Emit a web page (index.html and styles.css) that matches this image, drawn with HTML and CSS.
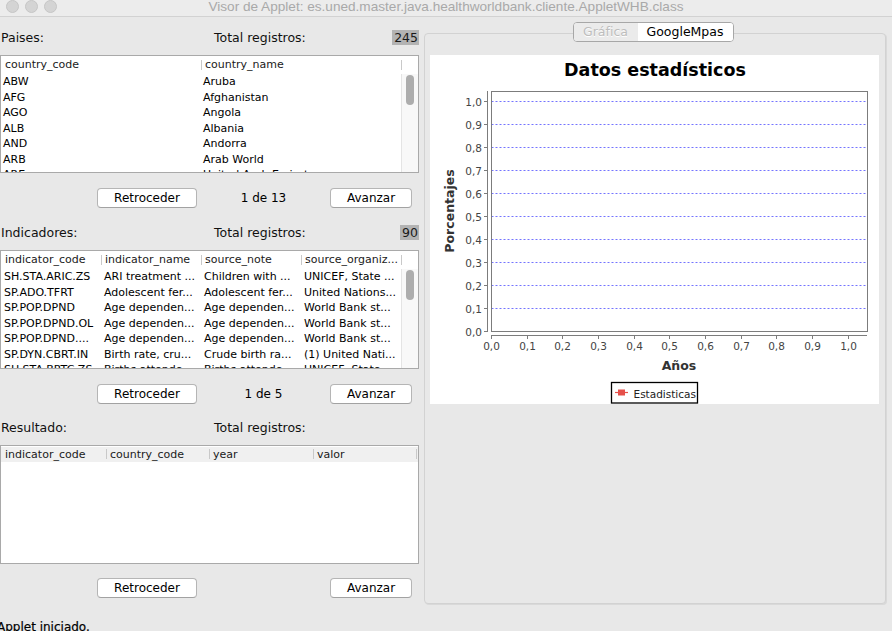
FILE: index.html
```html
<!DOCTYPE html>
<html lang="es">
<head>
<meta charset="utf-8">
<title>Visor de Applet</title>
<link rel="stylesheet" href="styles.css">
</head>
<body>
<div class="titlebar">
  <div class="lights"><span></span><span></span><span></span></div>
  <div class="wtitle">Visor de Applet: es.uned.master.java.healthworldbank.cliente.AppletWHB.class</div>
  <div></div>
</div>
<div class="main">
  <div class="left">
    <section class="group g1">
      <div class="labelrow"><span>Paises:</span><span>Total registros:</span><span class="count">245</span></div>
      <div class="table t1">
        <div class="thead"><div class="th">country_code</div><div class="th">country_name</div><div class="th"></div></div>
        <div class="tbody">
          <div class="rows">
            <div class="tr"><span>ABW</span><span>Aruba</span></div>
            <div class="tr"><span>AFG</span><span>Afghanistan</span></div>
            <div class="tr"><span>AGO</span><span>Angola</span></div>
            <div class="tr"><span>ALB</span><span>Albania</span></div>
            <div class="tr"><span>AND</span><span>Andorra</span></div>
            <div class="tr"><span>ARB</span><span>Arab World</span></div>
            <div class="tr"><span>ARE</span><span>United Arab Emirates</span></div>
          </div>
          <div class="vscroll"><div class="thumb"></div></div>
        </div>
      </div>
      <div class="pager"><button class="btn back">Retroceder</button><span class="page">1 de 13</span><button class="btn next">Avanzar</button></div>
    </section>
    <section class="group g2">
      <div class="labelrow"><span>Indicadores:</span><span>Total registros:</span><span class="count">90</span></div>
      <div class="table t2">
        <div class="thead"><div class="th">indicator_code</div><div class="th">indicator_name</div><div class="th">source_note</div><div class="th">source_organiz...</div><div class="th"></div></div>
        <div class="tbody">
          <div class="rows">
            <div class="tr"><span>SH.STA.ARIC.ZS</span><span>ARI treatment ...</span><span>Children with ...</span><span>UNICEF, State ...</span></div>
            <div class="tr"><span>SP.ADO.TFRT</span><span>Adolescent fer...</span><span>Adolescent fer...</span><span>United Nations...</span></div>
            <div class="tr"><span>SP.POP.DPND</span><span>Age dependen...</span><span>Age dependen...</span><span>World Bank st...</span></div>
            <div class="tr"><span>SP.POP.DPND.OL</span><span>Age dependen...</span><span>Age dependen...</span><span>World Bank st...</span></div>
            <div class="tr"><span>SP.POP.DPND....</span><span>Age dependen...</span><span>Age dependen...</span><span>World Bank st...</span></div>
            <div class="tr"><span>SP.DYN.CBRT.IN</span><span>Birth rate, cru...</span><span>Crude birth ra...</span><span>(1) United Nati...</span></div>
            <div class="tr"><span>SH.STA.BRTC.ZS</span><span>Births attende...</span><span>Births attende...</span><span>UNICEF, State ...</span></div>
          </div>
          <div class="vscroll"><div class="thumb"></div></div>
        </div>
      </div>
      <div class="pager"><button class="btn back">Retroceder</button><span class="page">1 de 5</span><button class="btn next">Avanzar</button></div>
    </section>
    <section class="group g3">
      <div class="labelrow"><span>Resultado:</span><span>Total registros:</span><span></span></div>
      <div class="table t3">
        <div class="thead"><div class="th">indicator_code</div><div class="th">country_code</div><div class="th">year</div><div class="th">valor</div><div class="th"></div></div>
        <div class="tbody"></div>
      </div>
      <div class="pager"><button class="btn back">Retroceder</button><span class="page"></span><button class="btn next">Avanzar</button></div>
    </section>
  </div>
  <div class="right">
    <div class="tabs"><span class="tab off">Gráfica</span><span class="tab on">GoogleMpas</span></div>
    <div class="tabpanel">
      <div class="chart">
        <svg class="chart-svg" viewBox="0 0 449 349" width="449" height="349">
          <text class="ctitle" x="225" y="21" text-anchor="middle">Datos estadísticos</text>
          <g class="grid">
            <line x1="61.5" y1="46.5" x2="437" y2="46.5"/>
            <line x1="61.5" y1="69.5" x2="437" y2="69.5"/>
            <line x1="61.5" y1="92.5" x2="437" y2="92.5"/>
            <line x1="61.5" y1="115.5" x2="437" y2="115.5"/>
            <line x1="61.5" y1="138.5" x2="437" y2="138.5"/>
            <line x1="61.5" y1="161.5" x2="437" y2="161.5"/>
            <line x1="61.5" y1="184.5" x2="437" y2="184.5"/>
            <line x1="61.5" y1="207.5" x2="437" y2="207.5"/>
            <line x1="61.5" y1="230.5" x2="437" y2="230.5"/>
            <line x1="61.5" y1="253.5" x2="437" y2="253.5"/>
          </g>
          <rect class="plotbox" x="61.5" y="36.5" width="376" height="240"/>
          <g class="axis">
            <line x1="57.5" y1="36" x2="57.5" y2="277"/>
            <line x1="54" y1="46.5" x2="57.5" y2="46.5"/>
            <line x1="54" y1="69.5" x2="57.5" y2="69.5"/>
            <line x1="54" y1="92.5" x2="57.5" y2="92.5"/>
            <line x1="54" y1="115.5" x2="57.5" y2="115.5"/>
            <line x1="54" y1="138.5" x2="57.5" y2="138.5"/>
            <line x1="54" y1="161.5" x2="57.5" y2="161.5"/>
            <line x1="54" y1="184.5" x2="57.5" y2="184.5"/>
            <line x1="54" y1="207.5" x2="57.5" y2="207.5"/>
            <line x1="54" y1="230.5" x2="57.5" y2="230.5"/>
            <line x1="54" y1="253.5" x2="57.5" y2="253.5"/>
            <line x1="54" y1="276.5" x2="57.5" y2="276.5"/>
            <line x1="61" y1="280.5" x2="437" y2="280.5"/>
            <line x1="61.5" y1="280.5" x2="61.5" y2="284"/>
            <line x1="97.5" y1="280.5" x2="97.5" y2="284"/>
            <line x1="132.5" y1="280.5" x2="132.5" y2="284"/>
            <line x1="168.5" y1="280.5" x2="168.5" y2="284"/>
            <line x1="204.5" y1="280.5" x2="204.5" y2="284"/>
            <line x1="239.5" y1="280.5" x2="239.5" y2="284"/>
            <line x1="275.5" y1="280.5" x2="275.5" y2="284"/>
            <line x1="311.5" y1="280.5" x2="311.5" y2="284"/>
            <line x1="346.5" y1="280.5" x2="346.5" y2="284"/>
            <line x1="382.5" y1="280.5" x2="382.5" y2="284"/>
            <line x1="418.5" y1="280.5" x2="418.5" y2="284"/>
          </g>
          <g class="ticklbl" text-anchor="end">
            <text x="52" y="50.7">1,0</text>
            <text x="52" y="73.7">0,9</text>
            <text x="52" y="96.7">0,8</text>
            <text x="52" y="119.7">0,7</text>
            <text x="52" y="142.7">0,6</text>
            <text x="52" y="165.7">0,5</text>
            <text x="52" y="188.7">0,4</text>
            <text x="52" y="211.7">0,3</text>
            <text x="52" y="234.7">0,2</text>
            <text x="52" y="257.7">0,1</text>
            <text x="52" y="280.7">0,0</text>
          </g>
          <g class="ticklbl" text-anchor="middle">
            <text x="61.5" y="295">0,0</text>
            <text x="97.5" y="295">0,1</text>
            <text x="132.5" y="295">0,2</text>
            <text x="168.5" y="295">0,3</text>
            <text x="204.5" y="295">0,4</text>
            <text x="239.5" y="295">0,5</text>
            <text x="275.5" y="295">0,6</text>
            <text x="311.5" y="295">0,7</text>
            <text x="346.5" y="295">0,8</text>
            <text x="382.5" y="295">0,9</text>
            <text x="418.5" y="295">1,0</text>
          </g>
          <text class="atitle" x="249" y="314.5" text-anchor="middle">Años</text>
          <text class="atitle" transform="translate(24 156) rotate(-90)" text-anchor="middle">Porcentajes</text>
          <rect class="legend" x="181.5" y="327.5" width="86" height="20.5"/>
          <line class="lgline" x1="185" y1="337.5" x2="198" y2="337.5"/>
          <rect class="lgmark" x="188" y="334.5" width="7" height="6"/>
          <text class="lgtext" x="203.5" y="342.5">Estadisticas</text>
        </svg>
      </div>
    </div>
  </div>
</div>
<div class="status">Applet iniciado.</div>
</body>
</html>
```
FILE: styles.css
```css
* { box-sizing: border-box; margin: 0; padding: 0; }
html, body { width: 892px; height: 631px; overflow: hidden; background: #e8e8e8; }
body { font-family: "DejaVu Sans", sans-serif; color: #000; }

.titlebar {
  height: 17px;
  background: #ececec;
  border-bottom: 1px solid #d2d2d2;
  display: grid;
  grid-template-columns: 1fr auto 1fr;
  align-items: start;
}
.lights { display: flex; gap: 6px; padding-left: 6px; }
.lights span {
  width: 13px; height: 13px; border-radius: 50%;
  background: #d4d4d4; border: 1px solid #c6c6c6;
}
.wtitle {
  font-family: "Liberation Sans", Arial, sans-serif;
  font-size: 13.6px; line-height: 14px; color: #a9a9a9;
  white-space: nowrap;
}

.main { display: flex; gap: 5px; height: 602px; }
.left { width: 419px; display: flex; flex-direction: column; }
.group { display: flex; flex-direction: column; }
.g1 { margin-top: 12px; }
.g2 { margin-top: 16px; }
.g3 { margin-top: 15px; }

.labelrow {
  display: grid;
  grid-template-columns: 213px 1fr auto;
  align-items: center;
  height: 16px;
  font-size: 12.5px;
  padding-left: 1px;
  color: #111;
}
.count {
  background: #b3b3b3;
  line-height: 15px;
  padding: 0 1px 0 2px;
  color: #1a1a1a;
}

.table {
  margin-top: 10px;
  width: 419px;
  height: 118px;
  border: 1px solid #a9a9a9;
  background: #fff;
  display: flex;
  flex-direction: column;
}
.t2, .t3 { height: 119px; }
.thead { display: grid; height: 18px; flex: none; }
.t1 .thead { grid-template-columns: 200px 200px 17px; }
.t2 .thead { grid-template-columns: 100px 100px 100px 100px 17px; }
.t3 .thead {
  grid-template-columns: 105px 103px 104px 103px 2px;
  background: #f0f0f0;
  height: 15px;
  margin: 1px 0 2px;
}
.th {
  font-size: 11px;
  line-height: 18px;
  padding-left: 4px;
  color: #1a1a1a;
  white-space: nowrap;
  overflow: hidden;
  background: linear-gradient(#c9c9c9, #c9c9c9) no-repeat left 0 top 4px / 1px 10px;
}
.t3 .th { line-height: 15px; background-position: left 0 top 2px; }
.th:first-child { background: none; }

.tbody { flex: 1; min-height: 0; display: flex; overflow: hidden; }
.rows { flex: 1; overflow: hidden; }
.tr { display: grid; height: 15.5px; }
.t1 .tr { grid-template-columns: 200px 200px; }
.t2 .tr { grid-template-columns: 100px 100px 100px 100px; }
.tr span {
  font-size: 11px;
  line-height: 15.5px;
  padding-left: 2px;
  white-space: nowrap;
  overflow: hidden;
}
.t2 .tr span { padding-left: 3px; }
.vscroll {
  width: 17px; flex: none;
  background: #f8f8f8;
  border-left: 1px solid #e4e4e4;
  padding: 1px 0 0 4px;
}
.thumb { width: 8px; height: 30px; border-radius: 4px; background: #adadad; }

.pager {
  display: flex;
  align-items: center;
  margin-top: 15px;
  padding-left: 97px;
  height: 20px;
}
.g3 .pager { margin-top: 14px; }
.btn {
  font-family: "DejaVu Sans", sans-serif;
  font-size: 12px;
  height: 20px;
  background: #fff;
  border: 1px solid #b5b5b5;
  border-bottom-color: #a2a2a2;
  border-radius: 4px;
  color: #000;
}
.back { width: 100px; }
.next { width: 82px; }
.page { flex: 0 0 133px; text-align: center; font-size: 12px; }

.right { width: 462px; display: flex; flex-direction: column; align-items: center; }
.tabs {
  margin-top: 5px;
  margin-bottom: -9px;
  margin-right: 4px;
  height: 20px;
  display: flex;
  border: 1px solid #a7a7a7;
  border-radius: 4px;
  overflow: hidden;
  background: #fff;
  position: relative;
  z-index: 1;
}
.tab { font-size: 12.5px; line-height: 18px; text-align: center; }
.tab.off { width: 64px; background: #ebebeb; color: #bdbdbd; text-shadow: 0 1px 0 #fff; }
.tab.on { width: 95px; background: #fff; color: #000; }

.tabpanel {
  width: 462px;
  height: 571px;
  border: 1px solid #d2d2d2;
  border-radius: 4px;
  box-shadow: 1px 1px 0 #d9d9d9;
  background: #e8e8e8;
  padding: 21px 6px 0 5px;
  align-self: stretch;
}
.chart { width: 449px; height: 349px; background: #fff; }
.chart-svg { display: block; }
.ctitle { font-family: "DejaVu Sans", sans-serif; font-weight: bold; font-size: 17.5px; fill: #000; }
.grid line { stroke: #7474ff; stroke-width: 1; stroke-dasharray: 2 2; }
.plotbox { fill: none; stroke: #7c7c7c; stroke-width: 1; }
.axis line { stroke: #7c7c7c; stroke-width: 1; }
.ticklbl text { font-family: "DejaVu Sans", sans-serif; font-size: 10.5px; fill: #444; }
.atitle { font-family: "DejaVu Sans", sans-serif; font-weight: bold; font-size: 12.5px; fill: #333; }
.legend { fill: #fff; stroke: #000; stroke-width: 1.3; }
.lgline { stroke: #e5504a; stroke-width: 1.2; }
.lgmark { fill: #e5504a; }
.lgtext { font-family: "DejaVu Sans", sans-serif; font-size: 10.5px; fill: #222; }

.status {
  font-size: 12px;
  line-height: 16px;
  margin-left: -3px;
  color: #000;
  -webkit-text-stroke: 0.2px #000;
}
```
